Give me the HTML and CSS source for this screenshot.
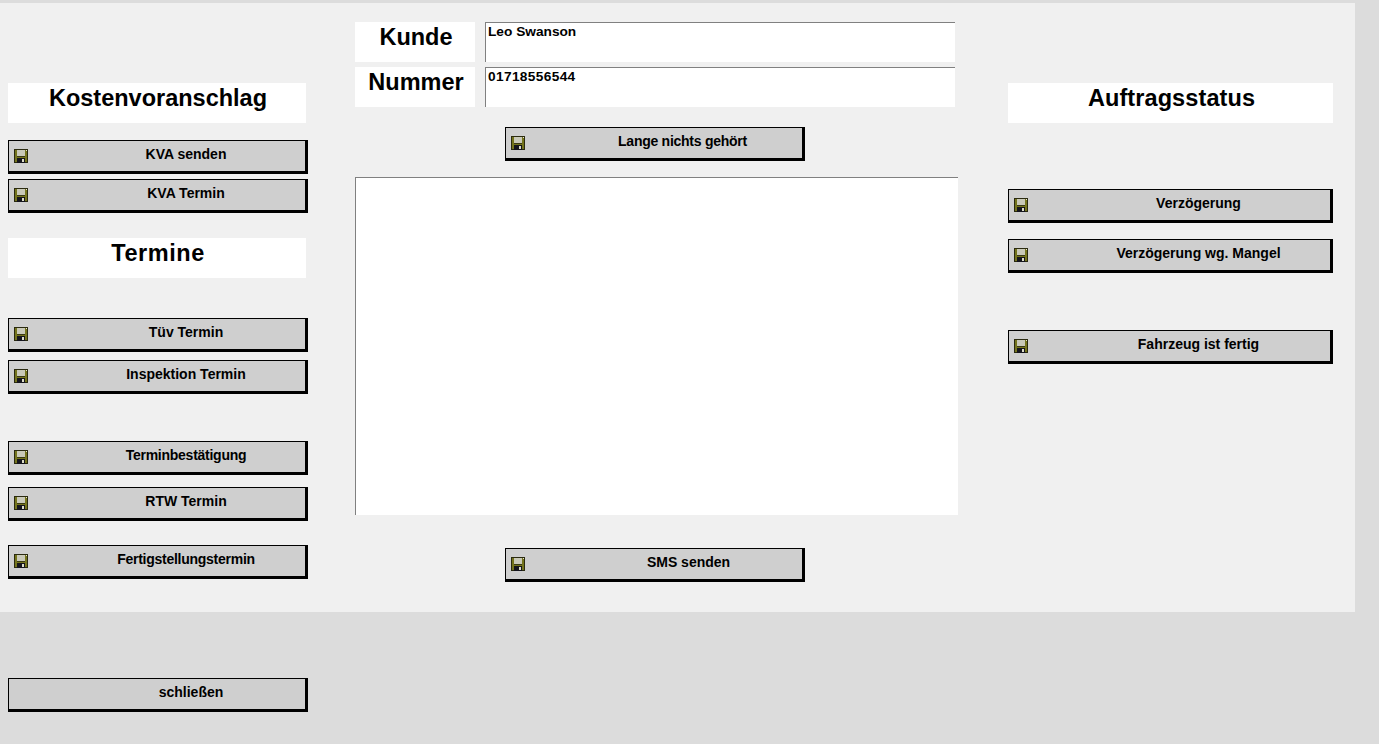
FILE: index.html
```html
<!DOCTYPE html>
<html lang="de">
<head>
<meta charset="utf-8">
<title>SMS</title>
<link rel="stylesheet" href="styles.css">
</head>
<body>
<svg class="sprite" width="0" height="0" aria-hidden="true">
  <symbol id="floppy" viewBox="0 0 14 14">
    <path d="M0 0H14V14H0Z" fill="#2a2a10"/>
    <path d="M1 1H13V13H1Z" fill="#74741c"/>
    <path d="M3 1H11V7H3Z" fill="#c9c9b8"/>
    <path d="M3 7H11V8H3Z" fill="#3a3a14"/>
    <path d="M3 9H11V14H3Z" fill="#14141c"/>
    <path d="M8 10H10V13H8Z" fill="#dcdcc8"/>
    <path d="M12 1H13V2H12Z" fill="#e8e8d0"/>
  </symbol>
</svg>
<main class="form">
  <section class="col col-left">
    <h2 class="title">Kostenvoranschlag</h2>
    <button class="btn gap-17"><svg class="icon"><use href="#floppy"/></svg><span class="label">KVA senden</span></button>
    <button class="btn gap-5"><svg class="icon"><use href="#floppy"/></svg><span class="label">KVA Termin</span></button>
    <h2 class="title title-wide gap-25">Termine</h2>
    <button class="btn gap-40"><svg class="icon"><use href="#floppy"/></svg><span class="label">Tüv Termin</span></button>
    <button class="btn gap-8"><svg class="icon"><use href="#floppy"/></svg><span class="label">Inspektion Termin</span></button>
    <button class="btn gap-47"><svg class="icon"><use href="#floppy"/></svg><span class="label label-tight">Terminbestätigung</span></button>
    <button class="btn gap-12"><svg class="icon"><use href="#floppy"/></svg><span class="label">RTW Termin</span></button>
    <button class="btn gap-24"><svg class="icon"><use href="#floppy"/></svg><span class="label label-tight">Fertigstellungstermin</span></button>
  </section>
  <section class="col col-center">
    <div class="field">
      <h2 class="title field-label">Kunde</h2>
      <div class="box field-value">Leo Swanson</div>
    </div>
    <div class="field gap-5">
      <h2 class="title field-label">Nummer</h2>
      <div class="box field-value field-number">01718556544</div>
    </div>
    <button class="btn btn-center gap-20"><svg class="icon"><use href="#floppy"/></svg><span class="label label-tight">Lange nichts gehört</span></button>
    <div class="box message gap-16"></div>
    <button class="btn btn-center btn-send gap-33"><svg class="icon"><use href="#floppy"/></svg><span class="label">SMS senden</span></button>
  </section>
  <section class="col col-right">
    <h2 class="title">Auftragsstatus</h2>
    <button class="btn gap-66"><svg class="icon"><use href="#floppy"/></svg><span class="label">Verzögerung</span></button>
    <button class="btn gap-16"><svg class="icon"><use href="#floppy"/></svg><span class="label">Verzögerung wg. Mangel</span></button>
    <button class="btn gap-57"><svg class="icon"><use href="#floppy"/></svg><span class="label">Fahrzeug ist fertig</span></button>
  </section>
</main>
<footer class="footer">
  <button class="btn btn-close"><span class="label">schließen</span></button>
</footer>
</body>
</html>
```
FILE: styles.css
```css
* { box-sizing: border-box; }
html, body { margin: 0; height: 100%; }
body {
  background: #dcdcdc;
  padding-top: 3px;
  overflow: hidden;
  font-family: "Liberation Sans", Arial, sans-serif;
  color: #000;
}
.sprite { position: absolute; }
.form {
  display: flex;
  width: 1355px;
  height: 609px;
  background: #f0f0f0;
}
.col { display: flex; flex-direction: column; align-items: flex-start; }
.col-left { width: 300px; margin-left: 8px; padding-top: 80px; }
.col-center { width: 603px; margin-left: 47px; padding-top: 19px; }
.col-right { width: 325px; margin-left: 50px; padding-top: 80px; }
.title {
  margin: 0;
  width: 298px;
  height: 40px;
  padding-left: 2px;
  background: #fff;
  font-size: 23.5px;
  font-weight: 700;
  line-height: 30px;
  text-align: center;
}
.title-wide { letter-spacing: 0.55px; }
.col-right .title { width: 325px; letter-spacing: 0.1px; }
.field { display: flex; gap: 10px; }
.title.field-label { width: 120px; }
.box {
  background: #fff;
  border-top: 1px solid #808080;
  border-left: 1px solid #808080;
}
.field-value {
  width: 470px;
  height: 40px;
  padding: 1px 2px 0;
  font-size: 13.7px;
  font-weight: 700;
  line-height: 16px;
}
.field-number { letter-spacing: 0.35px; }
.message { width: 603px; height: 338px; }
.btn {
  display: flex;
  align-items: flex-start;
  width: 300px;
  height: 34px;
  padding: 0;
  background: #cfcfcf;
  border-style: solid;
  border-color: #000;
  border-width: 1px 3px 3px 1px;
  font: 700 14px/16px "Liberation Sans", Arial, sans-serif;
  color: #000;
  text-align: center;
}
.col-right .btn { width: 325px; }
.btn-center { margin-left: 150px; }
.icon { flex: none; width: 14px; height: 14px; margin: 8px 0 0 5px; }
.label { flex: 1; padding: 5px 0 0 39px; }
.label-tight { letter-spacing: -0.26px; }
.btn-center .label { padding-left: 38px; }
.btn-send .label { padding-left: 50px; }
.btn-close .label { padding-left: 68px; }
.footer { padding: 66px 0 0 8px; }
.gap-5 { margin-top: 5px; }
.gap-8 { margin-top: 8px; }
.gap-12 { margin-top: 12px; }
.gap-16 { margin-top: 16px; }
.gap-17 { margin-top: 17px; }
.gap-20 { margin-top: 20px; }
.gap-24 { margin-top: 24px; }
.gap-25 { margin-top: 25px; }
.gap-33 { margin-top: 33px; }
.gap-40 { margin-top: 40px; }
.gap-47 { margin-top: 47px; }
.gap-57 { margin-top: 57px; }
.gap-66 { margin-top: 66px; }
```
